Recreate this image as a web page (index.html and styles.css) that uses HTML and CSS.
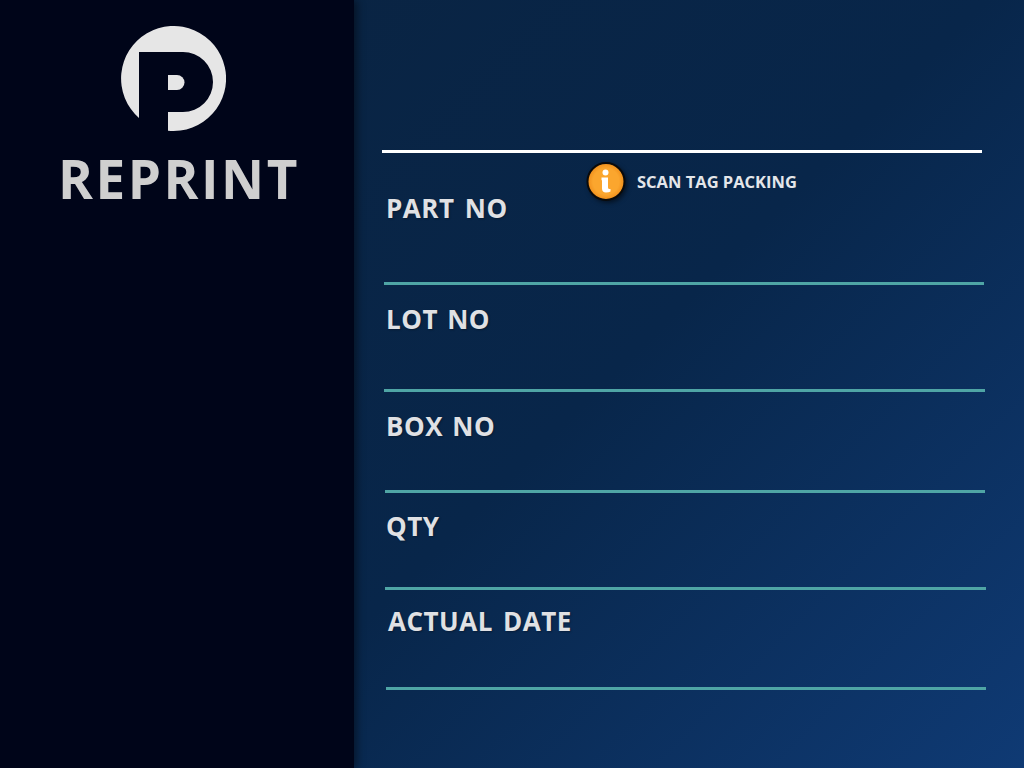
FILE: index.html
```html
<!DOCTYPE html>
<html lang="en">
<head>
  <meta charset="UTF-8">
  <meta name="viewport" content="width=device-width, initial-scale=1.0">
  <title>Reprint</title>
  <link rel="stylesheet" href="styles.css">
</head>
<body>
  <div class="app">
    <aside class="sidebar">
      <svg class="logo" width="105" height="105" viewBox="0 0 105 105">
        <path fill="#e6e6e6" d="M47 104.700V86H62A30 30 0 0 0 62 26H18V92A52.500 52.500 0 1 1 47 104.700z"/>
        <path fill="#e6e6e6" d="M47 49h9a7.500 7.500 0 0 1 0 15h-9z"/>
      </svg>
      <h1 class="title">REPRINT</h1>
    </aside>
    <main class="content">
      <div class="rule"></div>
      <div class="notice">
        <svg class="notice-icon" width="40" height="40" viewBox="0 0 40 40">
          <defs>
            <radialGradient id="orange">
              <stop offset="0.7" stop-color="#fba62e"/>
              <stop offset="1" stop-color="#ef8d1a"/>
            </radialGradient>
          </defs>
          <circle cx="20" cy="20.500" r="18.500" fill="url(#orange)" stroke="#0a0a0a" stroke-width="2"/>
          <circle cx="19.500" cy="11.500" r="3" fill="#fff"/>
          <path fill="#fff" d="M15.500 16.500h6.500v10q0 2 2.500 1.500v2.500q-1.500 1-4.500 1-4 0-4-4v-7.500q0-1-.5-1z"/>
        </svg>
        <span class="notice-text">SCAN TAG PACKING</span>
      </div>
      <div class="fields">
        <div class="field field-part"><label>PART NO</label></div>
        <div class="field field-lot"><label>LOT NO</label></div>
        <div class="field field-box"><label>BOX NO</label></div>
        <div class="field field-qty"><label>QTY</label></div>
        <div class="field field-date"><label>ACTUAL DATE</label></div>
      </div>
    </main>
  </div>
</body>
</html>
```

FILE: styles.css
```css
html, body {
  margin: 0;
  height: 100%;
}
body {
  font-family: "Open Sans", "Noto Sans", sans-serif;
  overflow: hidden;
}
.app {
  display: flex;
  width: 1024px;
  height: 768px;
  background: linear-gradient(135deg, #0a2340 0%, #08264a 55%, #0f3a74 100%);
}
.sidebar {
  width: 354px;
  flex: none;
  height: 100%;
  background: #000519;
  box-shadow: 3px 0 8px rgba(0, 0, 0, 0.45);
  display: flex;
  flex-direction: column;
  align-items: center;
  padding-top: 26px;
  box-sizing: border-box;
}
.logo {
  display: block;
  margin-left: -8px;
}
.title {
  margin: 13px 0 0 4px;
  font-size: 53px;
  line-height: 70px;
  font-weight: 700;
  color: #cfcfcf;
  letter-spacing: 2.500px;
}
.content {
  position: relative;
  flex: 1;
  padding: 150px 0 0 28px;
}
.rule {
  width: 600px;
  height: 3px;
  background: #fff;
}
.notice {
  position: absolute;
  left: 232px;
  top: 161px;
  display: flex;
  align-items: flex-start;
  gap: 11px;
  color: #e4e6ea;
  font-size: 16.500px;
  line-height: 40px;
  font-weight: 700;
}
.notice-text { padding-top: 1px; }
.notice-icon {
  display: block;
  filter: drop-shadow(2px 2px 2px rgba(0, 0, 0, 0.5));
}
.field {
  box-sizing: border-box;
  width: 600px;
  border-bottom: 3px solid;
  border-image: linear-gradient(#17606f 33%, #1f7a84 33%, #1f7a84 66%, #4fa5a5 66%) 1;
  color: #e0e1e4;
}
.field label {
  display: block;
  padding-left: 2px;
  font-size: 26px;
  line-height: 34px;
  font-weight: 700;
  letter-spacing: 0.500px;
  word-spacing: 2px;
  text-shadow: 1px 1px 2px rgba(0, 0, 0, 0.3);
}
.field-part { height: 132px; margin-left: 2px; padding-top: 38px; }
.field-part label { word-spacing: 3px; }
.field-lot { height: 107px; margin-left: 2px; width: 601px; padding-top: 17px; }
.field-box { height: 101px; margin-left: 3px; padding-top: 17px; }
.field-box label, .field-qty label { padding-left: 1px; }
.field-qty { height: 97px; margin-left: 3px; width: 601px; padding-top: 16px; }
.field-date { height: 100px; margin-left: 4px; padding-top: 14px; }
.field-date label { word-spacing: 3px; }
```
